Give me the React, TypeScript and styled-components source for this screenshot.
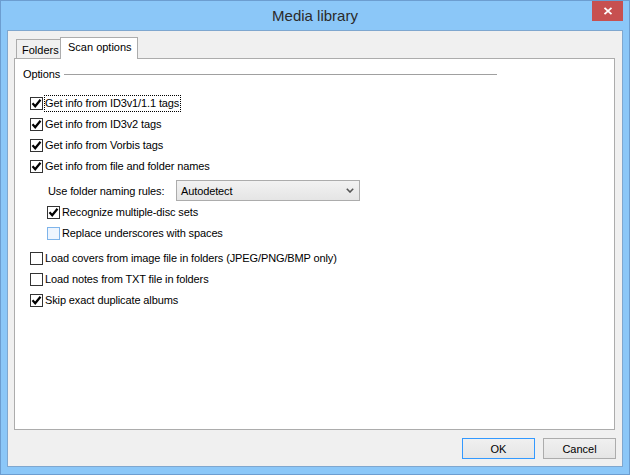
import * as React from "react";
import styled, { createGlobalStyle } from "styled-components";

const GlobalStyle = createGlobalStyle`
  * {
    box-sizing: border-box;
  }
  html,
  body {
    margin: 0;
    padding: 0;
    background: #8bc7f8;
  }
  body {
    font-family: "Liberation Sans", Arial, sans-serif;
    font-size: 11px;
    color: #000;
  }
`;

const Window = styled.div`
  width: 630px;
  height: 475px;
  display: flex;
  flex-direction: column;
  background: #8bc7f8;
  border: 1px solid #6c9dd0;
`;

const TitleBar = styled.div`
  height: 29px;
  display: grid;
  grid-template-columns: 1fr auto 1fr;
  align-items: start;
`;

const Title = styled.div`
  grid-column: 2;
  line-height: 29px;
  font-size: 15px;
  color: #2b2b2b;
`;

const CloseButton = styled.button`
  grid-column: 3;
  justify-self: end;
  width: 31px;
  height: 20px;
  margin-right: 6px;
  border: none;
  padding: 0;
  background: #c75050;
  display: flex;
  align-items: center;
  justify-content: center;
`;

const Client = styled.div`
  flex: 1;
  margin: 0 6px 7px;
  border: 1px solid #7fa7cf;
  background: #f0f0f0;
  display: flex;
  flex-direction: column;
  padding: 6px 7px 7px 6px;
`;

const TabStrip = styled.div`
  display: flex;
  align-items: flex-end;
  height: 21px;
  padding-left: 2px;
  position: relative;
  z-index: 1;
`;

const Tab = styled.div<{ $active?: boolean; $width: number }>`
  width: ${(p) => p.$width}px;
  height: ${(p) => (p.$active ? 22 : 19)}px;
  margin-left: ${(p) => (p.$active ? -1 : 0)}px;
  margin-bottom: ${(p) => (p.$active ? -1 : 0)}px;
  border: 1px solid #acacac;
  border-bottom: none;
  background: ${(p) => (p.$active ? "#fff" : "#f0f0f0")};
  padding: ${(p) => (p.$active ? "3px 0 0 7px" : "4px 0 0 5px")};
  line-height: 13px;
  white-space: nowrap;
`;

const Panel = styled.div`
  flex: 1;
  background: #fff;
  border: 1px solid #acacac;
  padding-top: 7px;
  letter-spacing: -0.12px;
`;

const GroupHeader = styled.div`
  display: flex;
  align-items: center;
  width: 474px;
  height: 16px;
  margin-left: 8px;
`;

const GroupRule = styled.div`
  flex: 1;
  height: 1px;
  margin-left: 4px;
  background: #a0a0a0;
`;

const OptionList = styled.div`
  display: flex;
  flex-direction: column;
  margin-top: 11px;
  padding-left: 15px;
`;

const Row = styled.div<{ $indent?: number; $gap?: number }>`
  height: 21px;
  display: flex;
  align-items: center;
  margin-left: ${(p) => p.$indent ?? 0}px;
  margin-top: ${(p) => p.$gap ?? 0}px;
`;

const Box = styled.span<{ $hover?: boolean }>`
  width: 13px;
  height: 13px;
  flex: none;
  border: 1px solid ${(p) => (p.$hover ? "#7eb4ea" : "#333")};
  background: ${(p) => (p.$hover ? "#eef5fe" : "#fff")};
  display: flex;
  align-items: center;
  justify-content: center;
`;

const Label = styled.span<{ $focus?: boolean }>`
  margin-left: 1px;
  height: 17px;
  line-height: 15px;
  border: 1px ${(p) => (p.$focus ? "dotted #000" : "solid transparent")};
  padding-right: 1px;
  white-space: nowrap;
`;

const FieldLabel = styled.span`
  width: 128px;
  white-space: nowrap;
`;

const Select = styled.div`
  width: 184px;
  height: 21px;
  border: 1px solid #acacac;
  background: linear-gradient(#f2f2f2, #e5e5e5);
  display: flex;
  align-items: center;
  justify-content: space-between;
  padding: 0 5px 0 4px;
`;

const Footer = styled.div`
  display: flex;
  justify-content: flex-end;
  gap: 8px;
  margin-top: 8px;
  margin-right: -1px;
`;

const Button = styled.button<{ $default?: boolean }>`
  width: 73px;
  height: 21px;
  padding: 0;
  font-family: inherit;
  font-size: 11px;
  color: #000;
  border: 1px solid ${(p) => (p.$default ? "#3399ff" : "#acacac")};
  background: linear-gradient(#f0f0f0, #e5e5e5);
`;

const Check = () => (
  <svg width="11" height="11" viewBox="0 0 11 11">
    <path d="M1.5 5.3 L4.2 8.3 L9.5 1.7" fill="none" stroke="#000" strokeWidth="2.2" />
  </svg>
);

type CheckProps = {
  label: string;
  checked?: boolean;
  focus?: boolean;
  hover?: boolean;
  indent?: number;
  gap?: number;
};

const CheckRow: React.FC<CheckProps> = ({ label, checked, focus, hover, indent, gap }) => (
  <Row $indent={indent} $gap={gap}>
    <Box $hover={hover}>{checked && <Check />}</Box>
    <Label $focus={focus}>{label}</Label>
  </Row>
);

const App: React.FC = () => (
  <>
    <GlobalStyle />
    <Window>
      <TitleBar>
        <Title>Media library</Title>
        <CloseButton>
          <svg width="10" height="8" viewBox="0 0 10 8">
            <path d="M1.5 0.8 L8.5 7.2 M8.5 0.8 L1.5 7.2" stroke="#fff" strokeWidth="1.8" />
          </svg>
        </CloseButton>
      </TitleBar>
      <Client>
        <TabStrip>
          <Tab $width={45}>Folders</Tab>
          <Tab $width={78} $active>
            Scan options
          </Tab>
        </TabStrip>
        <Panel>
          <GroupHeader>
            Options
            <GroupRule />
          </GroupHeader>
          <OptionList>
            <CheckRow label="Get info from ID3v1/1.1 tags" checked focus />
            <CheckRow label="Get info from ID3v2 tags" checked />
            <CheckRow label="Get info from Vorbis tags" checked />
            <CheckRow label="Get info from file and folder names" checked />
            <Row $indent={18} $gap={3}>
              <FieldLabel>Use folder naming rules:</FieldLabel>
              <Select>
                Autodetect
                <svg width="8" height="5" viewBox="0 0 8 5">
                  <path d="M0.8 0.8 L4 4 L7.2 0.8" fill="none" stroke="#555" strokeWidth="1.6" />
                </svg>
              </Select>
            </Row>
            <CheckRow label="Recognize multiple-disc sets" checked indent={17} gap={1} />
            <CheckRow label="Replace underscores with spaces" hover indent={17} />
            <CheckRow label="Load covers from image file in folders (JPEG/PNG/BMP only)" gap={4} />
            <CheckRow label="Load notes from TXT file in folders" />
            <CheckRow label="Skip exact duplicate albums" checked />
          </OptionList>
        </Panel>
        <Footer>
          <Button $default>OK</Button>
          <Button>Cancel</Button>
        </Footer>
      </Client>
    </Window>
  </>
);

export default App;
